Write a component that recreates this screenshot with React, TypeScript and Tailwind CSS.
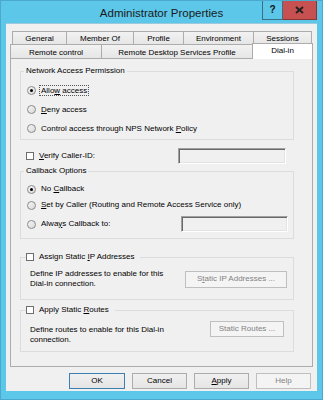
import type { ReactNode } from "react";

const topTabs: [string, number][] = [
  ["General", 54],
  ["Member Of", 67],
  ["Profile", 50],
  ["Environment", 70],
  ["Sessions", 59],
];

const bottomTabs: [string, number][] = [
  ["Remote control", 91],
  ["Remote Desktop Services Profile", 151],
];

function U({ children }: { children: ReactNode }) {
  return <span className="underline underline-offset-[1px]">{children}</span>;
}

function Radio({ checked }: { checked?: boolean }) {
  return (
    <span className="w-[9px] h-[9px] shrink-0 rounded-full border border-[#8a8a8a] bg-gradient-to-br from-[#f6f6f6] to-[#d9d9d9] flex items-center justify-center">
      {checked && <span className="w-[3px] h-[3px] rounded-full bg-black" />}
    </span>
  );
}

function Check() {
  return <span className="w-[8px] h-[8px] shrink-0 border border-[#6e6e6e] bg-white" />;
}

function Field({ w }: { w: string }) {
  return (
    <div
      className={`${w} h-[16px] bg-[#f0f0f0] border border-t-[#a0a0a0] border-l-[#a0a0a0] border-r-white border-b-white shadow-[inset_1px_1px_0_#696969,inset_-1px_-1px_0_#e3e3e3]`}
    />
  );
}

function Btn({
  children,
  w,
  h = "h-[16px]",
  disabled,
  primary,
}: {
  children: ReactNode;
  w: string;
  h?: string;
  disabled?: boolean;
  primary?: boolean;
}) {
  const tone = disabled
    ? "border-[#bfbfbf] bg-[#f4f4f4] text-[#838383]"
    : primary
      ? "border-[#3c7fb1] bg-gradient-to-b from-[#f0f0f0] to-[#e5e5e5] text-black"
      : "border-[#acacac] bg-gradient-to-b from-[#f0f0f0] to-[#e5e5e5] text-black";
  return (
    <div className={`${w} ${h} border ${tone} flex items-center justify-center`}>
      {children}
    </div>
  );
}

export default function App() {
  return (
    <div className="w-[323px] h-[400px] bg-[#5cc7e9] border border-[#4aa9cc] flex flex-col font-['Liberation_Sans',Arial,sans-serif] text-[8px] leading-[10px] text-black overflow-hidden">
      {/* title bar */}
      <div className="relative h-[22px] shrink-0">
        <div className="pt-[6px] text-center text-[11.5px] leading-[12px] text-[#1a1a1a]">
          Administrator Properties
        </div>
        <div className="absolute top-[-1px] right-[5px] flex">
          <div className="w-[21px] h-[20px] border border-[#3b6f86] border-t-0 flex items-center justify-center text-[10px] font-bold text-[#111]">
            ?
          </div>
          <div className="w-[34px] h-[20px] bg-[#c75050] border border-[#8a3434] border-t-0 border-l-0 flex items-center justify-center">
            <svg width="9" height="8" viewBox="0 0 9 8">
              <path d="M1 1 L8 7 M8 1 L1 7" stroke="#222" strokeWidth="2" />
            </svg>
          </div>
        </div>
      </div>

      {/* dialog body */}
      <div className="flex-1 mx-[5px] mb-[8px] bg-[#f0f0f0] border-t border-[#9cc9dc] flex flex-col px-[4px] pt-[7px]">
        <div className="flex ml-[2px] h-[13px]">
          {topTabs.map(([label, w], i) => (
            <div
              key={label}
              style={{ width: w }}
              className={`border-t border-l border-[#acacac] bg-gradient-to-b from-[#f2f2f2] to-[#e6e6e6] flex items-center justify-center pt-[2px] ${
                i === topTabs.length - 1 ? "border-r" : ""
              }`}
            >
              {label}
            </div>
          ))}
        </div>
        <div className="flex items-end h-[14px]">
          {bottomTabs.map(([label, w]) => (
            <div
              key={label}
              style={{ width: w }}
              className="h-[14px] border-t border-l border-[#acacac] bg-gradient-to-b from-[#f2f2f2] to-[#e6e6e6] flex items-center justify-center pt-[3px]"
            >
              {label}
            </div>
          ))}
          <div className="relative z-10 w-[61px] h-[16px] mb-[-1px] border-t border-l border-r border-[#acacac] bg-white flex justify-center pt-[2px]">
            Dial-in
          </div>
        </div>

        <div className="h-[309px] border border-[#acacac] pl-[9px] pt-[7px]">
          {/* Network Access Permission */}
          <fieldset className="w-[274px] border border-[#dcdcdc] pb-[1px]">
            <legend className="ml-[3px] px-[2px] leading-[10px]">Network Access Permission</legend>
            <div className="pt-[5px] pl-[6px]">
              <div className="h-[19px] flex items-center gap-[3px]">
                <Radio checked />
                <span className="border border-dotted border-[#555] px-[1px] leading-[9px]">
                  Allo<U>w</U> access
                </span>
              </div>
              <div className="h-[19px] flex items-center gap-[3px]">
                <Radio />
                <span className="ml-[2px]">
                  <U>D</U>eny access
                </span>
              </div>
              <div className="h-[19px] flex items-center gap-[3px]">
                <Radio />
                <span className="ml-[2px]">
                  Control access through NPS Network <U>P</U>olicy
                </span>
              </div>
            </div>
          </fieldset>

          {/* Verify Caller-ID */}
          <div className="mt-[8px] w-[266px] h-[16px] flex items-center pl-[6px]">
            <Check />
            <span className="ml-[5px]">
              <U>V</U>erify Caller-ID:
            </span>
            <div className="ml-auto">
              <Field w="w-[108px]" />
            </div>
          </div>

          {/* Callback Options */}
          <fieldset className="mt-[2px] w-[274px] border border-[#dcdcdc] pb-[6px]">
            <legend className="ml-[3px] px-[2px] leading-[10px]">Callback Options</legend>
            <div className="pt-[5px] pl-[6px] pr-[5px]">
              <div className="h-[16px] flex items-center gap-[3px]">
                <Radio checked />
                <span className="ml-[2px]">
                  No <U>C</U>allback
                </span>
              </div>
              <div className="h-[16px] flex items-center gap-[3px]">
                <Radio />
                <span className="ml-[2px]">
                  <U>S</U>et by Caller (Routing and Remote Access Service only)
                </span>
              </div>
              <div className="mt-[3px] h-[16px] flex items-center gap-[3px]">
                <Radio />
                <span className="ml-[2px]">
                  Alwa<U>y</U>s Callback to:
                </span>
                <div className="ml-auto">
                  <Field w="w-[107px]" />
                </div>
              </div>
            </div>
          </fieldset>

          {/* Assign Static IP Addresses */}
          <fieldset className="mt-[13px] w-[274px] border border-[#dcdcdc] pb-[9px]">
            <legend className="ml-[5px] pr-[6px] leading-[10px] flex items-center gap-[5px]">
              <Check />
              <span>
                Assign Static <U>I</U>P Addresses
              </span>
            </legend>
            <div className="pt-[6px] pl-[9px] pr-[6px] h-[22px] box-content flex items-center">
              <div>
                Define IP addresses to enable for this
                <br />
                Dial-in connection.
              </div>
              <div className="ml-auto">
                <Btn w="w-[102px]" h="h-[17px]" disabled>
                  S<U>t</U>atic IP Addresses ...
                </Btn>
              </div>
            </div>
          </fieldset>

          {/* Apply Static Routes */}
          <fieldset className="mt-[5px] w-[274px] border border-[#dcdcdc] pb-[6px]">
            <legend className="ml-[5px] pr-[6px] leading-[10px] flex items-center gap-[5px]">
              <Check />
              <span>
                Apply Static <U>R</U>outes
              </span>
            </legend>
            <div className="pt-[6px] pl-[9px] pr-[9px] flex items-start">
              <div className="mt-[4px]">
                Define routes to enable for this Dial-in
                <br />
                connection.
              </div>
              <div className="ml-auto">
                <Btn w="w-[74px]" disabled>
                  Static Routes ...
                </Btn>
              </div>
            </div>
          </fieldset>
        </div>

        {/* buttons */}
        <div className="mt-[6px] flex justify-end gap-[7px] pr-[2px]">
          <Btn w="w-[56px]" primary>
            OK
          </Btn>
          <Btn w="w-[55px]">Cancel</Btn>
          <Btn w="w-[55px]">
            <U>A</U>pply
          </Btn>
          <Btn w="w-[55px]" disabled>
            Help
          </Btn>
        </div>
      </div>
    </div>
  );
}
